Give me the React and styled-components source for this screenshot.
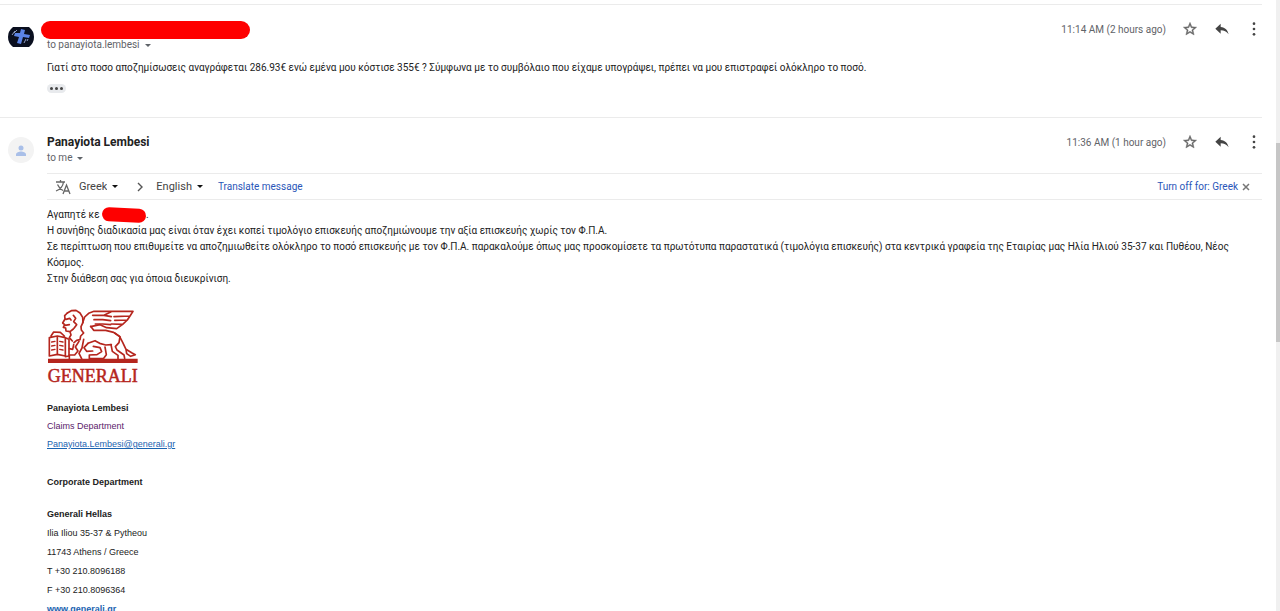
import React from "react";
import styled, { createGlobalStyle } from "styled-components";

const Global = createGlobalStyle`
  * { box-sizing: border-box; }
  body { margin: 0; background: #fff; color: #222; font-family: Roboto, "Liberation Sans", sans-serif; }
  button, select { font: inherit; color: inherit; }
`;

const Page = styled.div`
  display: flex;
  height: 100vh;
  overflow: hidden;
`;

const Thread = styled.main`
  flex: 1;
  min-width: 0;
  overflow: hidden;
  padding: 4px 14px 0 0;
`;

const Message = styled.article`
  display: grid;
  grid-template-columns: 39px 1fr;
  border-top: 1px solid #ebebeb;
  padding: 16px 0 24px 8px;
`;

const Header = styled.header`
  display: flex;
  justify-content: space-between;
`;

const Sender = styled.h3`
  display: flex;
  margin: 0;
  font-size: 12px;
  line-height: 16px;
  font-weight: 700;
  height: 16px;
`;

const RecipientButton = styled.button`
  display: flex;
  align-items: center;
  gap: 5px;
  border: 0;
  background: none;
  padding: 0;
  font-size: 10px;
  line-height: 16px;
  color: #5f6368;
`;

const Caret = styled.span`
  border: 3px solid transparent;
  border-top-color: ${(p) => p.$color || "#5f6368"};
  border-bottom-width: 0;
`;

const Actions = styled.div`
  display: flex;
  align-items: center;
  height: 16px;
  font-size: 10px;
  color: #5f6368;
  gap: 16px;
`;

const IconButton = styled.button`
  display: flex;
  border: 0;
  background: none;
  padding: 0;
  width: 16px;
  height: 16px;
  color: ${(p) => p.$color || "#444"};
`;

const Body = styled.div`
  font-size: 10px;
  line-height: 16px;
  padding: 7px 12px 0 0;
  p { margin: 0; }
`;

const Trimmed = styled.button`
  display: flex;
  align-items: center;
  justify-content: center;
  gap: 2px;
  width: 19px;
  height: 9px;
  margin-top: 8px;
  padding: 0;
  border: 0;
  border-radius: 5px;
  background: #e8eaed;
  i { width: 3px; height: 3px; border-radius: 50%; background: #444; }
`;

const NameMark = styled.span`
  width: 209px;
  height: 18px;
  margin-left: -6px;
  border-radius: 9px;
  background: #fe0000;
`;

const WordMark = styled.span`
  display: inline-block;
  vertical-align: middle;
  width: 44px;
  height: 14px;
  border-radius: 7px;
  background: #fe0000;
  transform: rotate(3deg);
`;

const Translate = styled.div`
  display: flex;
  align-items: center;
  height: 27px;
  margin-top: 7px;
  padding: 0 12px 0 8px;
  border: solid #ebebeb;
  border-width: 1px 0;
  font-size: 11px;
  color: #444;
`;

const Language = styled.label`
  display: flex;
  align-items: center;
  gap: 5px;
  select {
    appearance: none;
    border: 0;
    padding: 0;
    background: none;
    field-sizing: content;
  }
`;

const TranslateIcon = styled.svg`
  margin-right: 8px;
`;

const Chevron = styled.svg`
  margin: 0 12px 0 18px;
`;

const LinkButton = styled.button`
  border: 0;
  background: none;
  padding: 0;
  font-size: 10px;
  color: #2a56b8;
  margin-left: ${(p) => (p.$end ? "auto" : "15px")};
`;

const Close = styled(IconButton)`
  width: 8px;
  height: 8px;
  margin-left: 4px;
`;

const Signature = styled.address`
  font-family: "Liberation Sans", Arial, sans-serif;
  font-style: normal;
  font-size: 9px;
  line-height: 18px;
  color: #222;
  padding-top: 22px;
`;

const LogoMark = styled.svg`
  display: block;
  margin-bottom: 14px;
`;

const SigLine = styled.div`
  color: ${(p) => p.$color || "inherit"};
  font-weight: ${(p) => (p.$bold ? 700 : 400)};
  a { color: #1a63b0; }
`;

const SigBlock = styled.div`
  margin-top: ${(p) => p.$gap || 0}px;
  line-height: ${(p) => (p.$loose ? 19 : 18)}px;
`;

const Rail = styled.div`
  width: 4px;
  background: #f0f0f0;
  padding-top: 143px;
`;

const Thumb = styled.div`
  height: 199px;
  background: #c6c6c6;
`;

const Star = () => (
  <svg width="16" height="16" viewBox="0 0 24 24" fill="currentColor">
    <path d="M22 9.24l-7.19-.62L12 2 9.19 8.63 2 9.24l5.46 4.73L5.82 21 12 17.27 18.18 21l-1.63-7.03L22 9.24zM12 15.4l-3.76 2.27 1-4.28-3.32-2.88 4.38-.38L12 6.1l1.71 4.04 4.38.38-3.32 2.88 1 4.28L12 15.4z" stroke="currentColor" strokeWidth=".6" />
  </svg>
);
const Reply = () => (
  <svg width="16" height="16" viewBox="0 0 24 24" fill="currentColor">
    <path d="M10 9V4l-8 7.500 8 7.500v-5c5 0 9 1.600 12 6-1.500-6-5-10.500-12-11z" />
  </svg>
);
const More = () => (
  <svg width="16" height="16" viewBox="0 0 24 24" fill="currentColor">
    <circle cx="12" cy="4" r="2" /><circle cx="12" cy="12" r="2" /><circle cx="12" cy="20" r="2" />
  </svg>
);

const MessageActions = ({ time }) => (
  <Actions>
    <time>{time}</time>
    <IconButton aria-label="Star" $color="#666"><Star /></IconButton>
    <IconButton aria-label="Reply"><Reply /></IconButton>
    <IconButton aria-label="More"><More /></IconButton>
  </Actions>
);

const Logo = () => (
  <LogoMark width="92" height="76" viewBox="21 27 276 228" role="img" aria-label="Generali">
    <g fill="none" stroke="#b5261e" strokeWidth="5" strokeLinejoin="round" strokeLinecap="round">
      {/* head and mane */}
      <path d="M82 39l12-7 14-1 12 8 8 13 1 15-6 13 1 10 7 9-9 9-2 11-10 2-8 7" />
      <path d="M82 39l-8 8 1 10-7 12 6 5-4 8 7 2 1 9 12 2 10-8M78 58l11-3 4 5M75 76l13-2M100 46l7 9-6 10 9 9-8 11M90 95l3 10-5 8 9 10" />
      {/* wing */}
      <path d="M128 68l6-17 12-11 16-6h117l-9 14-48 2M270 48l-8 12-38 1M262 60l-14 13-34-1M248 73l-18 13-30-3-20-9-28 6" />
      <path d="M158 46h34l22 4M162 59h26l24 3M166 72h22l24 2M192 46l20-10" />
      {/* back, haunch and tail */}
      <path d="M152 79l9 12h36l24 6 18 13 9 17 10 21 17 10 11 6-14 5-12-8-2-13" />
      <path d="M224 99l16 11-3 18-11 12 5 10 21 15 2 10M213 134l4 20 17 12v10" />
      {/* belly and legs */}
      <path d="M117 124l-11 17 8 12-10 12H88v11M131 118l-5 26-9 16 8 16M144 130l21-8 14 8 18 5 17-1" />
      <path d="M144 130l-12 13 8 11 18-1M160 139l20 4 5 12-14 9-23 1v11h42l9-12-4-23M88 146l10 2 3-14" />
      {/* book */}
      <path d="M33 108l8-12 20 1 12 11M28 113l24-5 24 5v55l-24-5-24 5zM52 109v54M76 113l11 5v50l-11 2" />
      <path d="M35 126l10-2M35 138l10-2M35 150l10-2M59 124l10 2M59 136l10 2M59 148l10 2" strokeWidth="4" />
    </g>
    <path fill="#b5261e" d="M24 176h269v13H24z" />
    <text x="23" y="246" fontFamily="Liberation Serif, serif" fontSize="54" fill="#b5261e" stroke="#b5261e" strokeWidth="1.500">GENERALI</text>
  </LogoMark>
);

const PhotoAvatar = () => (
  <svg width="26" height="32" viewBox="0 0 26 32" aria-hidden="true">
    <path d="M5 6h16q5 4 5 10t-5 10H5q-5-4-5-10T5 6z" fill="#0a0f1f" />
    <path d="M13 8l4 1-1 4 6 1-1 3-6-1-2 7-4-1 2-6-5-1 1-3 5 0z" fill="#5b83e6" />
    <path d="M4 14l3-4M6 12l3-3M16 22l2-4M19 20l1-2" stroke="#8d9cc4" strokeWidth="1" />
  </svg>
);

const PersonAvatar = () => (
  <svg width="26" height="32" viewBox="0 0 26 32" aria-hidden="true">
    <circle cx="13" cy="16" r="13" fill="#f3f3f3" />
    <circle cx="13" cy="14" r="2.500" fill="#a9bfe8" />
    <path d="M8 22v-1.500c0-2 3-3 5-3s5 1 5 3V22z" fill="#a9bfe8" />
  </svg>
);

export default function App() {
  return (
    <Page>
      <Global />
      <Thread>
        <Message>
          <PhotoAvatar />
          <div>
            <Header>
              <div>
                <Sender><NameMark /></Sender>
                <RecipientButton>to panayiota.lembesi <Caret /></RecipientButton>
              </div>
              <MessageActions time="11:14 AM (2 hours ago)" />
            </Header>
            <Body>
              <p>Γιατί στο ποσο αποζημίσωσεις αναγράφεται 286.93€ ενώ εμένα μου κόστισε 355€ ? Σύμφωνα με το συμβόλαιο που είχαμε υπογράψει, πρέπει να μου επιστραφεί ολόκληρο το ποσό.</p>
              <Trimmed aria-label="Show trimmed content"><i /><i /><i /></Trimmed>
            </Body>
          </div>
        </Message>
        <Message>
          <PersonAvatar />
          <div>
            <Header>
              <div>
                <Sender>Panayiota Lembesi</Sender>
                <RecipientButton>to me <Caret /></RecipientButton>
              </div>
              <MessageActions time="11:36 AM (1 hour ago)" />
            </Header>
            <Translate>
              <TranslateIcon width="16" height="16" viewBox="0 0 16 16" fill="none" stroke="#666" strokeWidth="1.300">
                <path d="M1 3h9M5.500 1v2M2.500 5.500C4 9 6 10.500 8 11.500M8.500 3C8 7 5 10.500 1 12M8 15l3.500-9L15 15M9.500 12h4.500" />
              </TranslateIcon>
              <Language><select aria-label="From"><option>Greek</option></select><Caret $color="#111" /></Language>
              <Chevron width="8" height="10" viewBox="0 0 8 10" fill="none" stroke="#555" strokeWidth="1.400"><path d="M2 1l4 4-4 4" /></Chevron>
              <Language><select aria-label="To"><option>English</option></select><Caret $color="#111" /></Language>
              <LinkButton>Translate message</LinkButton>
              <LinkButton $end>Turn off for: Greek</LinkButton>
              <Close aria-label="Close"><svg width="8" height="8" viewBox="0 0 8 8" stroke="#777" strokeWidth="1.500"><path d="M1 1l6 6M7 1L1 7" /></svg></Close>
            </Translate>
            <Body>
              <p>Αγαπητέ κε <WordMark />.</p>
              <p>Η συνήθης διαδικασία μας είναι όταν έχει κοπεί τιμολόγιο επισκευής αποζημιώνουμε την αξία επισκευής χωρίς τον Φ.Π.Α.</p>
              <p>Σε περίπτωση που επιθυμείτε να αποζημιωθείτε ολόκληρο το ποσό επισκευής με τον Φ.Π.Α. παρακαλούμε όπως μας προσκομίσετε τα πρωτότυπα παραστατικά (τιμολόγια επισκευής) στα κεντρικά γραφεία της Εταιρίας μας Ηλία Ηλιού 35-37 και Πυθέου, Νέος Κόσμος.</p>
              <p>Στην διάθεση σας για όποια διευκρίνιση.</p>
            </Body>
            <Signature>
              <Logo />
              <SigLine $bold>Panayiota Lembesi</SigLine>
              <SigLine $color="#5b1a6b">Claims Department</SigLine>
              <SigLine><a href="mailto:Panayiota.Lembesi@generali.gr">Panayiota.Lembesi@generali.gr</a></SigLine>
              <SigBlock $gap={20}>
                <SigLine $bold>Corporate Department</SigLine>
              </SigBlock>
              <SigBlock $gap={14} $loose>
                <SigLine $bold>Generali Hellas</SigLine>
                <SigLine>Ilia Iliou 35-37 &amp; Pytheou</SigLine>
                <SigLine>11743 Athens / Greece</SigLine>
                <SigLine>T +30 210.8096188</SigLine>
                <SigLine>F +30 210.8096364</SigLine>
                <SigLine $bold><a href="http://www.generali.gr">www.generali.gr</a></SigLine>
              </SigBlock>
            </Signature>
          </div>
        </Message>
      </Thread>
      <Rail><Thumb /></Rail>
    </Page>
  );
}
